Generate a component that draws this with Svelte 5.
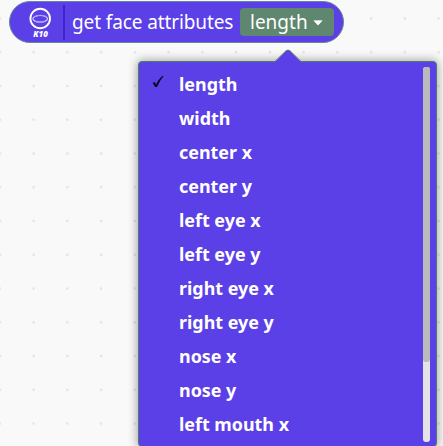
<script>
  const options = [
    'length', 'width', 'center x', 'center y', 'left eye x', 'left eye y',
    'right eye x', 'right eye y', 'nose x', 'nose y', 'left mouth x'
  ];
  let selected = $state('length');
</script>

<main class="workspace">
  <svg class="grid" width="443" height="446" aria-hidden="true">
    <defs>
      <pattern id="marks" x="16.7" y="1.65" width="33.75" height="33.75" patternUnits="userSpaceOnUse">
        <path d="M15.7 16.9h2.4M16.9 15.7v2.4" stroke="#d9d9d9" stroke-width="1" />
      </pattern>
    </defs>
    <rect width="443" height="446" fill="url(#marks)" />
  </svg>

  <div class="block">
    <svg class="logo" width="26" height="34" viewBox="0 0 26 34">
      <circle cx="13.2" cy="11.5" r="9.8" fill="none" stroke="#fff" stroke-width="1.9" />
      <ellipse cx="13.2" cy="11.8" rx="7.3" ry="3.3" fill="none" stroke="#d9d2fb" stroke-width="1.2" />
      <path d="M7.2 9.4Q13.2 6.9 19.2 9.4M7.2 14.3Q13.2 16.6 19.2 14.3" fill="none" stroke="#a99af4" stroke-width="1" />
      <text x="6.3" y="30" class="model" textLength="14.5" lengthAdjust="spacingAndGlyphs">K10</text>
    </svg>
    <span class="divider"></span>
    <span class="label">get face attributes</span>
    <button class="field">
      <span>{selected}</span>
      <svg width="10" height="6" viewBox="0 0 10 6"><path d="M1 .7h8L5.4 4.8q-.4.4-.8 0Z" fill="#fff" stroke="#fff" stroke-width=".7" stroke-linejoin="round" /></svg>
    </button>
  </div>

  <div class="menu">
    <svg class="arrow" width="30" height="14" viewBox="0 0 30 14">
      <path d="M1 14 13 1.8Q15 0 17 1.8L29 14Z" fill="#5b3fe7" />
      <path d="M1 13.3 13 1.8Q15 .2 17 1.8L29 13.3" fill="none" stroke="#56806f" />
    </svg>
    <ul>
      {#each options as option}
        <li>
          <span class="check">{#if option === selected}<svg width="12" height="13" viewBox="0 0 12 13"><path d="M.7 8.1 2.7 7 4.2 9.5Q6.6 3.7 10.8.8L11.5 1.2Q7.5 5.7 5 12L3.2 12Z" fill="#080820" /></svg>{/if}</span>
          <span class="name">{option}</span>
        </li>
      {/each}
    </ul>
    <div class="track"><div class="thumb"></div></div>
  </div>
</main>

<style>
  :global(body) { margin: 0; }
  .workspace {
    position: relative;
    width: 443px;
    height: 446px;
    overflow: hidden;
    background: #f9f9f9;
    font-family: "Noto Sans", "Open Sans", sans-serif;
    color: #fff;
    padding: 1px 0 0 9px;
    box-sizing: border-box;
  }
  .grid { position: absolute; left: 0; top: 0; }
  .block {
    position: relative;
    box-sizing: border-box;
    width: 335px;
    height: 42px;
    border: 1px solid #68869a;
    border-radius: 21px;
    background: #5b3fe7;
    display: flex;
    align-items: center;
  }
  .logo { margin-left: 17px; flex: none; margin-top: 3px; }
  .model { font: italic 800 8px "Open Sans", sans-serif; fill: #fff; }
  .divider { width: 1.5px; height: 35px; background: #3f22d0; margin: 0 0.5px 0 10px; flex: none; }
  .label {
    width: 163px;
    margin-left: 7px;
    font-size: 19px;
    line-height: 30px;
    white-space: nowrap;
    flex: none;
    letter-spacing: -0.11px;
  }
  .field {
    width: 94px;
    height: 28px;
    margin-left: 5px;
    border: 0;
    border-radius: 4px;
    background: #5f866f;
    color: #fff;
    font: 19px/26px "Noto Sans", "Open Sans", sans-serif;
    display: flex;
    align-items: center;
    padding: 0 10px;
    gap: 6px;
    box-sizing: border-box;
    flex: none;
  }
  .field span { width: 57px; flex: none; text-align: left; }
  .field svg { flex: none; margin-top: 2px; }
  .menu {
    position: absolute;
    left: 138px;
    top: 61px;
    width: 299px;
    height: 386px;
    box-sizing: border-box;
    border: 1px solid #4d7c67;
    border-radius: 4px;
    background: #5b3fe7;
    box-shadow: 0 0 10px 1px rgba(0, 0, 0, 0.34);
    display: flex;
    justify-content: space-between;
  }
  .arrow { position: absolute; left: 134px; top: -13px; }
  ul { margin: 0; padding: 5px 0 0; list-style: none; }
  li { height: 34px; display: flex; align-items: center; }
  .check { width: 27px; padding-left: 13px; flex: none; display: flex; }
  .check svg { margin-top: -5px; }
  .name { font-weight: 700; font-size: 17.9px; line-height: 34px; white-space: nowrap; }
  .track { width: 7px; height: 375px; margin: 5px 6px 0 0; border-radius: 3px; background: #e4e4e4; }
  .thumb { height: 295px; border-radius: 3px; background: #bababa; }
</style>
